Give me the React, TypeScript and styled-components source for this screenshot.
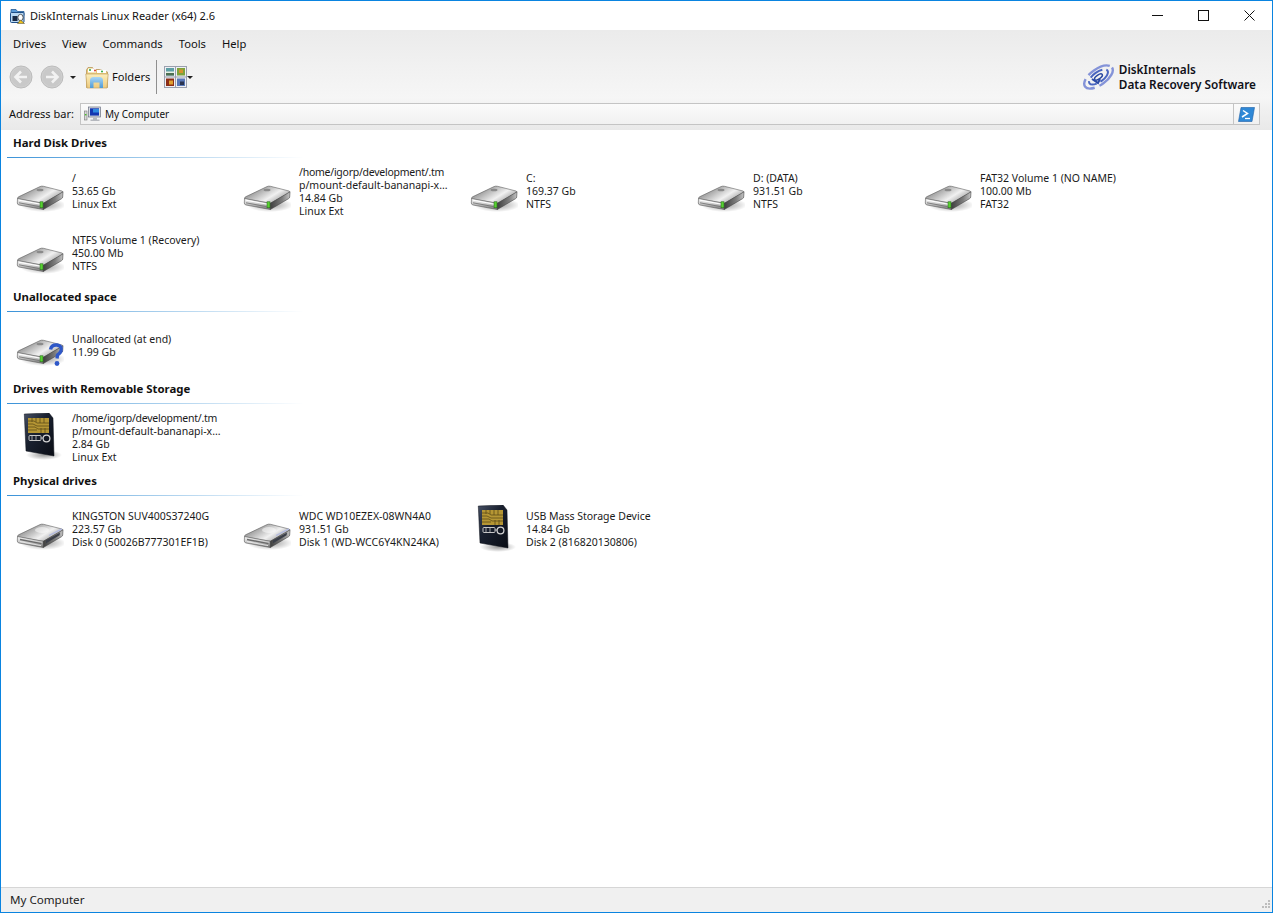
import React from 'react';
import styled, { createGlobalStyle } from 'styled-components';

const GlobalStyle = createGlobalStyle`
    html, body { margin: 0; padding: 0; height: 100%; overflow: hidden; background: #fff; }
    #root { height: 100%; }
    * { box-sizing: border-box; }
`;

const UI_FONT = `'Noto Sans', 'Liberation Sans', sans-serif`;

const Window = styled.div`
    width: 1273px;
    height: 913px;
    display: flex;
    flex-direction: column;
    border: 1px solid #0a84e0;
    font-family: ${UI_FONT};
    font-size: 11px;
    color: #111;
    background: #fff;
`;

const TitleBar = styled.div`
    height: 29px;
    flex: none;
    display: flex;
    align-items: center;
    padding-left: 8px;
    background: #fff;
`;

const TitleText = styled.span`
    margin-left: 3px;
    font-size: 11px;
    flex: 1;
    white-space: nowrap;
`;

const CaptionButton = styled.div`
    width: 46px;
    height: 29px;
    display: flex;
    align-items: center;
    justify-content: center;
`;

const Chrome = styled.div`
    flex: none;
    height: 100px;
    display: flex;
    flex-direction: column;
    background: linear-gradient(#ebebeb 0%, #f6f6f6 68%, #f0f0f0 80%, #e9e9e9 100%);
`;

const MenuBar = styled.div`
    height: 27px;
    display: flex;
    align-items: center;
    padding-left: 12px;
    gap: 16px;
    font-size: 11.2px;
`;

const Toolbar = styled.div`
    height: 40px;
    display: flex;
    align-items: center;
    padding-left: 8px;
`;

const Caret = styled.span<{ $gap: number }>`
    width: 0;
    height: 0;
    margin-left: ${p => p.$gap}px;
    border-left: 3px solid transparent;
    border-right: 3px solid transparent;
    border-top: 3px solid #222;
`;

const NavButton = styled.svg<{ $gap?: number }>`
    margin-left: ${p => p.$gap ?? 0}px;
    flex: none;
`;

const FolderIcon = styled.svg`
    margin-left: 9px;
    flex: none;
`;

const ToolLabel = styled.span`
    margin: 0 0 2px 3px;
    font-size: 11.1px;
`;

const ToolSeparator = styled.div`
    width: 1px;
    height: 34px;
    margin: 0 7px 0 6px;
    background: #8f8f8f;
`;

const Brand = styled.div`
    margin-left: auto;
    display: flex;
    align-items: center;
    padding-right: 16px;
    gap: 4px;
`;

const BrandText = styled.div`
    font-size: 11.8px;
    line-height: 15px;
    font-weight: 600;
    color: #101018;
    white-space: nowrap;
`;

const AddressRow = styled.div`
    height: 33px;
    display: flex;
    align-items: flex-start;
    padding: 6px 12px 0 8px;
`;

const AddressLabel = styled.span`
    width: 71px;
    font-size: 11px;
    line-height: 22px;
    white-space: nowrap;
`;

const AddressField = styled.div`
    flex: 1;
    height: 22px;
    display: flex;
    align-items: center;
    padding-left: 3px;
    border: 1px solid #c4c4c4;
    background: linear-gradient(#fbfbfb, #f1f1f1);
`;

const AddressText = styled.span`
    margin-left: 4px;
    font-size: 10px;
    flex: 1;
`;

const GoButton = styled.div`
    width: 26px;
    height: 20px;
    display: flex;
    align-items: center;
    justify-content: center;
    border-left: 1px solid #c4c4c4;
`;

const Content = styled.main`
    flex: 1;
    min-height: 0;
    padding-left: 6px;
    background: #fff;
`;

const SectionHeader = styled.h2`
    width: 296px;
    height: 28px;
    margin: 0 0 2px;
    padding: 5px 0 0 6px;
    font-size: 11.4px;
    line-height: 16px;
    font-weight: 700;
    color: #111;
    border-bottom: 1px solid;
    border-image: linear-gradient(90deg, #3a92d8 0%, #9cc8ea 45%, #ffffff 100%) 1;
`;

const TileGrid = styled.div`
    display: grid;
    grid-template-columns: repeat(5, 227px);
`;

const Tile = styled.div`
    height: 62px;
    display: flex;
    align-items: center;
    padding-left: 9px;
`;

const TileIcon = styled.svg`
    flex: none;
    margin-right: 8px;
`;

const TileText = styled.div<{ $even: boolean }>`
    width: 155px;
    margin-top: ${p => (p.$even ? 2 : 0)}px;
    font-size: 10.5px;
    line-height: 13px;
    color: #1a1a1a;
    white-space: nowrap;
`;

const TileLine = styled.div<{ $tight: boolean }>`
    letter-spacing: ${p => (p.$tight ? '-0.25px' : 'normal')};
`;

const StatusBar = styled.footer`
    flex: none;
    height: 25px;
    display: flex;
    align-items: center;
    justify-content: space-between;
    padding: 0 0 2px 9px;
    font-size: 11.6px;
    color: #222;
    background: #f0f0f0;
    border-top: 1px solid #d6d6d6;
`;

const Grip = styled.svg`
    align-self: flex-end;
    margin: 0 1px -1px 0;
`;

const DriveDefs = () => (
    <svg width="0" height="0" style={{ position: 'absolute' }}>
        <defs>
            <linearGradient id="hddTop" x1="0" y1="0" x2="1" y2="0.6">
                <stop offset="0" stopColor="#6e6e6e" />
                <stop offset="0.35" stopColor="#a8a8a8" />
                <stop offset="0.7" stopColor="#f1f1f1" />
                <stop offset="1" stopColor="#9c9c9c" />
            </linearGradient>
            <linearGradient id="hddFront" x1="0" y1="0" x2="0" y2="1">
                <stop offset="0" stopColor="#f4f4f4" />
                <stop offset="0.45" stopColor="#cfcfcf" />
                <stop offset="1" stopColor="#6f6f6f" />
            </linearGradient>
            <linearGradient id="hddSide" x1="0" y1="0" x2="1" y2="0">
                <stop offset="0" stopColor="#3f3f3f" />
                <stop offset="0.6" stopColor="#7d7d7d" />
                <stop offset="1" stopColor="#c4c4c4" />
            </linearGradient>
            <linearGradient id="cardBody" x1="0" y1="0" x2="1" y2="1">
                <stop offset="0" stopColor="#465064" />
                <stop offset="0.4" stopColor="#1a2130" />
                <stop offset="1" stopColor="#0a0d15" />
            </linearGradient>
            <linearGradient id="archBlue" x1="0" y1="0" x2="0" y2="1">
                <stop offset="0" stopColor="#a9d6f5" />
                <stop offset="1" stopColor="#4f9ad6" />
            </linearGradient>
            <linearGradient id="folderBody" x1="0" y1="0" x2="0" y2="1">
                <stop offset="0" stopColor="#fbeebb" />
                <stop offset="1" stopColor="#eecb7e" />
            </linearGradient>
            <radialGradient id="shadow">
                <stop offset="0" stopColor="#000" stopOpacity="0.4" />
                <stop offset="1" stopColor="#000" stopOpacity="0" />
            </radialGradient>
        </defs>
    </svg>
);

const HddBody = () => (
    <>
        <ellipse cx="27" cy="38" rx="23" ry="7" fill="url(#shadow)" />
        <path
            d="M1.5 31.5 Q1.2 30.6 3 29.6 L24 19.6 Q25.7 18.8 27.5 19.3 L46 24 Q47.8 24.7 46.2 25.8 L29 35.6 Q27.5 36.5 25.5 36 L3 32.2Z"
            fill="url(#hddTop)"
            stroke="#5f5f5f"
            strokeWidth="0.6"
        />
        <path
            d="M1.5 31.5 L27.3 36.3 L27.3 42.5 L3 38 Q1.3 37.5 1.3 36Z"
            fill="url(#hddFront)"
            stroke="#5a5a5a"
            strokeWidth="0.6"
        />
        <path
            d="M27.3 36.3 L47 24.8 L46.7 30 Q46.7 31 45.5 31.7 L27.3 42.5Z"
            fill="url(#hddSide)"
            stroke="#444"
            strokeWidth="0.6"
        />
    </>
);

const HddIcon = ({ question }: { question?: boolean }) => (
    <TileIcon width="48" height="48" viewBox="0 0 48 48">
        <HddBody />
        <path d="M3 33.2 L24 37.1" stroke="#fff" strokeWidth="1" />
        <path d="M3 35.8 L23.5 39.6" stroke="#6c6c6c" strokeWidth="0.8" />
        <rect x="24" y="34.8" width="3" height="6" fill="#58d033" stroke="#1c5e10" strokeWidth="0.5" />
        <ellipse cx="24" cy="23" rx="3.5" ry="1.3" fill="#8a8a8a" />
        {question && (
            <>
                <path
                    d="M34.5 28.5 Q35.5 23.5 41 24 Q46.5 25 45 30 Q44 32.5 41.5 34 L41 37.5"
                    fill="none"
                    stroke="#2f58c8"
                    strokeWidth="3.4"
                />
                <circle cx="41" cy="42.5" r="2.4" fill="#2f58c8" />
            </>
        )}
    </TileIcon>
);

const PhysicalIcon = () => (
    <TileIcon width="48" height="48" viewBox="0 0 48 48">
        <HddBody />
        <path d="M4 34.5 L25.5 38.6" stroke="#6a6a6a" strokeWidth="1.4" />
        <path d="M4 36.6 L25 40.6" stroke="#f0f0f0" strokeWidth="0.8" />
        <path d="M30 35.5 L44 27.4 L43.6 30.2 L30 38.2Z" fill="#3a3e48" />
        <path d="M33 30.5 L46 23.8" stroke="#b2bae0" strokeWidth="1.3" />
        <ellipse cx="26" cy="25" rx="7" ry="3" fill="#fff" opacity="0.5" />
    </TileIcon>
);

const CardIcon = () => (
    <TileIcon width="48" height="48" viewBox="0 0 48 48">
        <ellipse cx="28" cy="42" rx="18" ry="5" fill="url(#shadow)" />
        <path d="M8.3 1 L33 0 L37 5 L38 43 L10 38Z" fill="url(#cardBody)" stroke="#0d1018" strokeWidth="0.5" />
        <rect x="12" y="5" width="21" height="15" fill="#b59634" />
        <path
            d="M12 8h6l3 2h12M12 11h5l4 2h12M12 14h7l3 2h11M12 17h9M16 5v4M20 5v4M24 5v5M28 5v5M25 15v5M29 15v5"
            stroke="#5d4d18"
            strokeWidth="0.8"
            fill="none"
        />
        <rect x="13" y="22.5" width="12" height="5" rx="1" fill="none" stroke="#c7c7c7" strokeWidth="1" />
        <path d="M16 23v4M20 23v4" stroke="#c7c7c7" strokeWidth="0.8" />
        <path d="M25 25h2" stroke="#c7c7c7" strokeWidth="1" />
        <circle cx="30.5" cy="25.5" r="3.4" fill="none" stroke="#d5d5d5" strokeWidth="1.2" />
    </TileIcon>
);

const AppIcon = () => (
    <svg width="18" height="18" viewBox="0 0 18 18">
        <path d="M2 2.5h5l1.5 2H15v4H2Z" fill="#5a9ad6" stroke="#245a96" strokeWidth="0.8" />
        <rect x="1.5" y="5.5" width="13.5" height="10" rx="1" fill="#b9d8f2" stroke="#1f4f88" />
        <rect x="3.5" y="9" width="5" height="5" fill="#1a2a44" />
        <ellipse cx="11.5" cy="10.5" rx="2.6" ry="3.2" fill="#fff" stroke="#222" strokeWidth="0.7" />
        <path d="M8.5 16.5l3-3.5 4 3.500Z" fill="#eec21c" stroke="#222" strokeWidth="0.4" />
    </svg>
);

const NavArrow = ({ dir, gap }: { dir: 'left' | 'right'; gap?: number }) => (
    <NavButton $gap={gap} width="24" height="24" viewBox="0 0 24 24">
        <circle cx="12" cy="12" r="11" fill="#cfcfcf" stroke="#bcbcbc" />
        <circle cx="12" cy="12" r="9.5" fill="#c9c9c9" />
        <path
            d={dir === 'left' ? 'M18 12H7M12 6.5 6.5 12l5.5 5.5' : 'M6 12h11M12 6.5l5.5 5.5-5.5 5.5'}
            fill="none"
            stroke="#f2f2f2"
            strokeWidth="2.6"
        />
    </NavButton>
);

const Folders = () => (
    <FolderIcon width="24" height="24" viewBox="0 0 24 24">
        <path d="M1.5 5V22.5H22.5V7L14 4.5H9L7.5 2.5H3Z" fill="#e9c878" stroke="#b8975a" strokeWidth="0.8" />
        <rect x="3" y="3.5" width="8" height="4" fill="#fff" />
        <rect x="12" y="5" width="9" height="3" fill="#fff" />
        <circle cx="5" cy="5" r="1" fill="#2fa83a" />
        <circle cx="10" cy="5.4" r="1" fill="#d8392b" />
        <circle cx="17" cy="6.4" r="1" fill="#2fa83a" />
        <path d="M0.8 9H23.2L22 23H2Z" fill="url(#folderBody)" stroke="#c4a565" strokeWidth="0.7" />
        <path d="M5 23V15.5Q5 12 8.5 12H14.5Q18 12 18 15.5V23H14.5V17.5H8.5V23Z" fill="url(#archBlue)" />
    </FolderIcon>
);

const ViewsIcon = () => (
    <svg width="23" height="22" viewBox="0 0 23 22">
        <rect x="0.5" y="0.5" width="22" height="21" fill="#f0f0f4" stroke="#9aa0ae" />
        <path d="M11.5 0v22M0 11h23" stroke="#9aa0ae" />
        <rect x="2" y="2" width="8" height="7.5" fill="#5e9fa5" />
        <rect x="2" y="5.5" width="8" height="1.6" fill="#e6f0e4" />
        <rect x="2" y="7" width="8" height="2.5" fill="#4d6f52" />
        <rect x="13" y="2" width="8" height="7.5" fill="#7da23c" />
        <rect x="15" y="3.5" width="4" height="3.5" fill="#d7922e" />
        <rect x="2" y="12.5" width="8" height="7.5" fill="#8c2e18" />
        <rect x="5" y="14.5" width="4" height="4" fill="#e0a030" />
        <rect x="13" y="12.5" width="8" height="7.5" fill="#5878b8" />
        <rect x="16" y="15.5" width="4" height="3.5" fill="#2a3350" />
    </svg>
);

const BrandLogo = () => (
    <svg width="33" height="30" viewBox="0 0 33 30">
        <g transform="rotate(-35 16.5 15)" fill="none">
            <ellipse cx="16.5" cy="15" rx="16.5" ry="8" stroke="#8493d8" strokeWidth="2.4" strokeDasharray="24 5 18 5" />
            <ellipse cx="16.5" cy="15" rx="11" ry="5" stroke="#4a66c0" strokeWidth="2" strokeDasharray="14 4 10 4" />
            <ellipse cx="16.5" cy="15" rx="4.5" ry="2" stroke="#28479f" strokeWidth="1.5" />
        </g>
        <path d="M10 17l6 4 2-4" fill="none" stroke="#2c4aa6" strokeWidth="2" />
    </svg>
);

const ComputerIcon = () => (
    <svg width="17" height="16" viewBox="0 0 17 16">
        <rect x="0.5" y="5" width="2.5" height="9" fill="#d8d8d8" stroke="#777" strokeWidth="0.6" />
        <rect x="0.9" y="8" width="1.6" height="1.4" fill="#49c02c" />
        <rect x="4.5" y="1" width="12" height="10" fill="#d9dde4" stroke="#6a7080" strokeWidth="0.7" />
        <rect x="6" y="2.3" width="9" height="7.3" fill="#1436b0" />
        <rect x="9" y="3" width="6" height="3.5" fill="#2f8ae0" />
        <path d="M9 11.5h4v2h2.5v1.5H6.5V13.5H9Z" fill="#b5b8be" />
    </svg>
);

const GoIcon = () => (
    <svg width="17" height="15" viewBox="0 0 17 15">
        <path d="M3 0.5H16.5L14 14.5H0.5Z" fill="#2f88d6" stroke="#1c5ea6" strokeWidth="0.6" />
        <path d="M5 3.5L9.5 6.5 4 10" fill="none" stroke="#fff" strokeWidth="1.5" />
        <path d="M7 11.5H12" stroke="#fff" strokeWidth="1.3" />
    </svg>
);

type Drive = { lines: string[]; icon: 'hdd' | 'unknown' | 'card' | 'physical' };

const sections: { title: string; drives: Drive[] }[] = [
    {
        title: 'Hard Disk Drives',
        drives: [
            { icon: 'hdd', lines: ['/', '53.65 Gb', 'Linux Ext'] },
            {
                icon: 'hdd',
                lines: ['/home/igorp/development/.tm', 'p/mount-default-bananapi-x...', '14.84 Gb', 'Linux Ext'],
            },
            { icon: 'hdd', lines: ['C:', '169.37 Gb', 'NTFS'] },
            { icon: 'hdd', lines: ['D: (DATA)', '931.51 Gb', 'NTFS'] },
            { icon: 'hdd', lines: ['FAT32 Volume 1 (NO NAME)', '100.00 Mb', 'FAT32'] },
            { icon: 'hdd', lines: ['NTFS Volume 1 (Recovery)', '450.00 Mb', 'NTFS'] },
        ],
    },
    {
        title: 'Unallocated space',
        drives: [{ icon: 'unknown', lines: ['Unallocated (at end)', '11.99 Gb'] }],
    },
    {
        title: 'Drives with Removable Storage',
        drives: [
            {
                icon: 'card',
                lines: ['/home/igorp/development/.tm', 'p/mount-default-bananapi-x...', '2.84 Gb', 'Linux Ext'],
            },
        ],
    },
    {
        title: 'Physical drives',
        drives: [
            { icon: 'physical', lines: ['KINGSTON SUV400S37240G', '223.57 Gb', 'Disk 0 (50026B777301EF1B)'] },
            { icon: 'physical', lines: ['WDC WD10EZEX-08WN4A0', '931.51 Gb', 'Disk 1 (WD-WCC6Y4KN24KA)'] },
            { icon: 'card', lines: ['USB Mass Storage Device', '14.84 Gb', 'Disk 2 (816820130806)'] },
        ],
    },
];

const DriveIcon = ({ icon }: { icon: Drive['icon'] }) => {
    if (icon === 'card') return <CardIcon />;
    if (icon === 'physical') return <PhysicalIcon />;
    return <HddIcon question={icon === 'unknown'} />;
};

export default function App() {
    return (
        <Window>
            <GlobalStyle />
            <DriveDefs />
            <TitleBar>
                <AppIcon />
                <TitleText>DiskInternals Linux Reader (x64) 2.6</TitleText>
                <CaptionButton>
                    <svg width="11" height="11" viewBox="0 0 11 11">
                        <path d="M0 5.5H11" stroke="#111" />
                    </svg>
                </CaptionButton>
                <CaptionButton>
                    <svg width="11" height="11" viewBox="0 0 11 11">
                        <rect x="0.5" y="0.5" width="10" height="10" fill="none" stroke="#111" />
                    </svg>
                </CaptionButton>
                <CaptionButton>
                    <svg width="11" height="11" viewBox="0 0 11 11">
                        <path d="M0.5 0.5L10.5 10.5M10.5 0.5L0.5 10.5" stroke="#111" />
                    </svg>
                </CaptionButton>
            </TitleBar>
            <Chrome>
                <MenuBar>
                    <span>Drives</span>
                    <span>View</span>
                    <span>Commands</span>
                    <span>Tools</span>
                    <span>Help</span>
                </MenuBar>
                <Toolbar>
                    <NavArrow dir="left" />
                    <NavArrow dir="right" gap={7} />
                    <Caret $gap={6} />
                    <Folders />
                    <ToolLabel>Folders</ToolLabel>
                    <ToolSeparator />
                    <ViewsIcon />
                    <Caret $gap={0} />
                    <Brand>
                        <BrandLogo />
                        <BrandText>
                            DiskInternals
                            <br />
                            Data Recovery Software
                        </BrandText>
                    </Brand>
                </Toolbar>
                <AddressRow>
                    <AddressLabel>Address bar:</AddressLabel>
                    <AddressField>
                        <ComputerIcon />
                        <AddressText>My Computer</AddressText>
                        <GoButton>
                            <GoIcon />
                        </GoButton>
                    </AddressField>
                </AddressRow>
            </Chrome>
            <Content>
                {sections.map(section => (
                    <section key={section.title}>
                        <SectionHeader>{section.title}</SectionHeader>
                        <TileGrid>
                            {section.drives.map((drive, i) => (
                                <Tile key={i}>
                                    <DriveIcon icon={drive.icon} />
                                    <TileText $even={drive.lines.length % 2 === 0}>
                                        {drive.lines.map((line, j) => (
                                            <TileLine key={j} $tight={line.startsWith('/home')}>
                                                {line}
                                            </TileLine>
                                        ))}
                                    </TileText>
                                </Tile>
                            ))}
                        </TileGrid>
                    </section>
                ))}
            </Content>
            <StatusBar>
                <span>My Computer</span>
                <Grip width="12" height="12" viewBox="0 0 12 12" fill="#bdbdbd">
                    <rect x="9" y="1" width="2" height="2" />
                    <rect x="6" y="4" width="2" height="2" />
                    <rect x="9" y="4" width="2" height="2" />
                    <rect x="3" y="7" width="2" height="2" />
                    <rect x="6" y="7" width="2" height="2" />
                    <rect x="9" y="7" width="2" height="2" />
                </Grip>
            </StatusBar>
        </Window>
    );
}
